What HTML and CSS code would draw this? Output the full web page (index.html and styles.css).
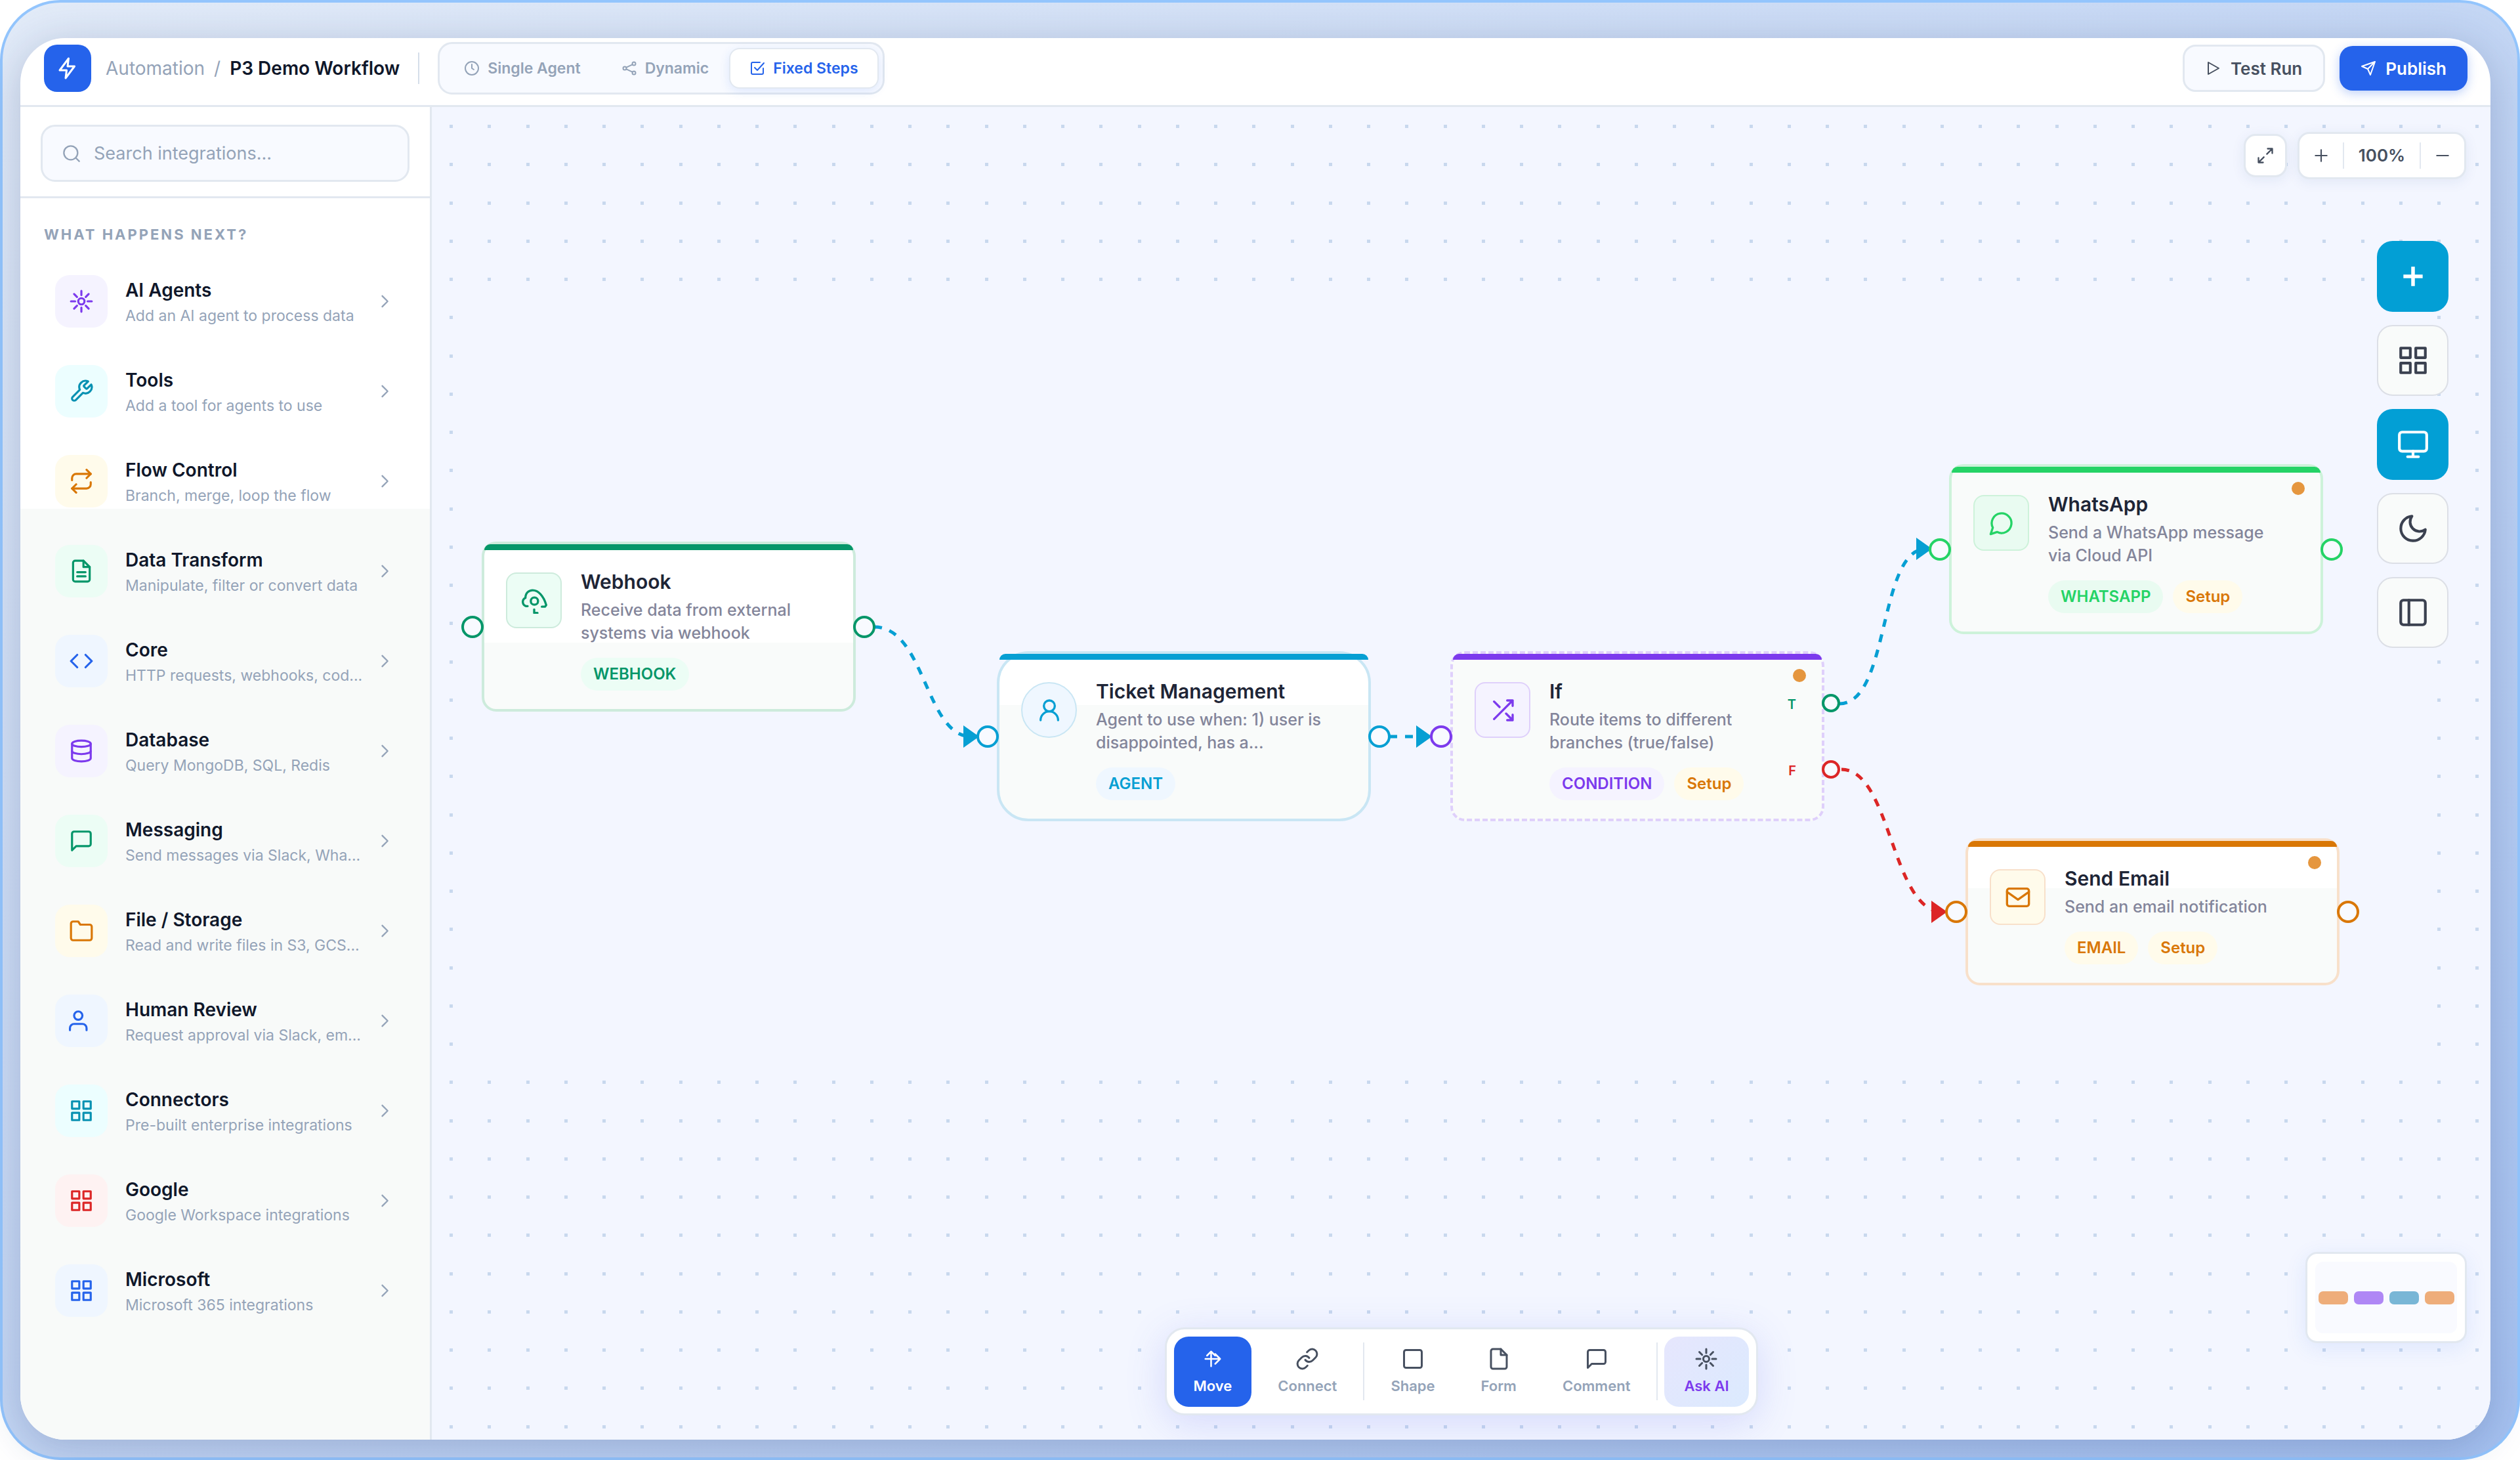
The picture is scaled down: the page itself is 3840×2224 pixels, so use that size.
FILE: index.html
```
<!DOCTYPE html>
<html lang="en">
<head>
  <meta charset="UTF-8">
  <meta name="viewport" content="width=device-width, initial-scale=1.0">
  <title>P3 Demo Workflow</title>
  <link rel="stylesheet" href="styles.css">
</head>
<body>

  <!-- shared icons -->
  <svg class="sprite" aria-hidden="true">
    <symbol id="i-bolt" viewBox="0 0 24 24"><path d="M13 2 4 14h7l-1 8 9-12h-7z"/></symbol>
    <symbol id="i-clock" viewBox="0 0 24 24"><circle cx="12" cy="12" r="10"/><path d="M12 6v6l3 2"/></symbol>
    <symbol id="i-share" viewBox="0 0 24 24"><circle cx="19" cy="5" r="2.5"/><circle cx="5" cy="12" r="2.5"/><circle cx="19" cy="19" r="2.5"/><path d="M7.500 10.700 16.600 6.300M7.500 13.300l9.100 4.400"/></symbol>
    <symbol id="i-check" viewBox="0 0 24 24"><path d="m8 11 4 4L22 4"/><path d="M21 12v7a2 2 0 0 1-2 2H5a2 2 0 0 1-2-2V5a2 2 0 0 1 2-2h11"/></symbol>
    <symbol id="i-play" viewBox="0 0 24 24"><path d="M4 3v18l16-9z"/></symbol>
    <symbol id="i-send" viewBox="0 0 24 24"><path d="M22 2 2 9l9 4 4 9zM22 2 11 13"/></symbol>
    <symbol id="i-search" viewBox="0 0 24 24"><circle cx="11" cy="11" r="9"/><path d="m18 18 4 4"/></symbol>
    <symbol id="i-expand" viewBox="0 0 24 24"><path d="M15 3h6v6M9 21H3v-6M21 3l-7 7M3 21l7-7"/></symbol>
    <symbol id="i-plus" viewBox="0 0 24 24"><path d="M12 4v16M4 12h16"/></symbol>
    <symbol id="i-minus" viewBox="0 0 24 24"><path d="M4 12h16"/></symbol>
    <symbol id="i-chevron" viewBox="0 0 24 24"><path d="m9 5 7 7-7 7"/></symbol>
    <symbol id="i-spark" viewBox="0 0 24 24"><circle cx="12" cy="12" r="3"/><path d="M12 2v4M12 18v4M2 12h4M18 12h4M5 5l2.800 2.800M16.200 16.200 19 19M19 5l-2.800 2.800M7.800 16.200 5 19"/></symbol>
    <symbol id="i-wrench" viewBox="0 0 24 24"><path d="M14.700 6.300a1 1 0 0 0 0 1.400l1.600 1.600a1 1 0 0 0 1.400 0l3.770-3.770a6 6 0 0 1-7.940 7.940l-6.910 6.910a2.120 2.120 0 0 1-3-3l6.910-6.910a6 6 0 0 1 7.940-7.940z"/></symbol>
    <symbol id="i-repeat" viewBox="0 0 24 24"><path d="m17 1 4 4-4 4"/><path d="M3 11V9a4 4 0 0 1 4-4h14M7 23l-4-4 4-4"/><path d="M21 13v2a4 4 0 0 1-4 4H3"/></symbol>
    <symbol id="i-file-text" viewBox="0 0 24 24"><path d="M14 2H6a2 2 0 0 0-2 2v16a2 2 0 0 0 2 2h12a2 2 0 0 0 2-2V8z"/><path d="M14 2v6h6M8 13h8M8 17h8"/></symbol>
    <symbol id="i-code" viewBox="0 0 24 24"><path d="m16 18 6-6-6-6M8 6l-6 6 6 6"/></symbol>
    <symbol id="i-database" viewBox="0 0 24 24"><ellipse cx="12" cy="5" rx="9" ry="3"/><path d="M3 5v14c0 1.660 4 3 9 3s9-1.340 9-3V5"/><path d="M3 12c0 1.660 4 3 9 3s9-1.340 9-3"/></symbol>
    <symbol id="i-message" viewBox="0 0 24 24"><path d="M21 15a2 2 0 0 1-2 2H7l-4 4V5a2 2 0 0 1 2-2h14a2 2 0 0 1 2 2z"/></symbol>
    <symbol id="i-folder" viewBox="0 0 24 24"><path d="M22 19a2 2 0 0 1-2 2H4a2 2 0 0 1-2-2V5a2 2 0 0 1 2-2h5l2 3h9a2 2 0 0 1 2 2z"/></symbol>
    <symbol id="i-person" viewBox="0 0 24 24"><circle cx="9" cy="7" r="4"/><path d="M1 21v-2a4 4 0 0 1 4-4h8a4 4 0 0 1 4 4v2"/></symbol>
    <symbol id="i-grid" viewBox="0 0 24 24"><path d="M3 3h7v7H3zM14 3h7v7h-7zM3 14h7v7H3zM14 14h7v7h-7z"/></symbol>
    <symbol id="i-monitor" viewBox="0 0 24 24"><rect x="2" y="3" width="20" height="14" rx="2"/><path d="M8 21h8M12 17v4"/></symbol>
    <symbol id="i-moon" viewBox="0 0 24 24"><path d="M21 12.790A9 9 0 1 1 11.210 3 7 7 0 0 0 21 12.790z"/></symbol>
    <symbol id="i-panel" viewBox="0 0 24 24"><rect x="3" y="3" width="18" height="18" rx="2"/><path d="M9 3v18"/></symbol>
    <symbol id="i-webhook" viewBox="0 0 24 24"><path d="M6 17H4.500C1 16 .5 11 4 9.500 4 5 7 2.500 10.600 2.500c5 0 10 5 12.400 13.500l-1 1.500h-3"/><circle cx="12.200" cy="12.400" r="3.300"/><path d="M12 20v3.200h3"/></symbol>
    <symbol id="i-agent" viewBox="0 0 24 24"><circle cx="12" cy="8" r="5"/><path d="M20 21a8 8 0 0 0-16 0"/></symbol>
    <symbol id="i-shuffle" viewBox="0 0 24 24"><path d="M16 3h5v5M4 20 21 3M21 16v5h-5M15 15l6 6M4 4l5 5"/></symbol>
    <symbol id="i-bubble" viewBox="0 0 24 24"><path d="M7.900 20A9 9 0 1 0 4 16.100L2 22z"/></symbol>
    <symbol id="i-mail" viewBox="0 0 24 24"><rect x="2" y="4" width="20" height="16" rx="2"/><path d="m22 7-10 7L2 7"/></symbol>
    <symbol id="i-move" viewBox="0 0 24 24"><path d="M5 8l5-5 5 5M10 3v18M3 12h18M15 6l6 6-6 6"/></symbol>
    <symbol id="i-link" viewBox="0 0 24 24"><path d="M10 13a5 5 0 0 0 7.540.540l3-3a5 5 0 0 0-7.070-7.070l-1.720 1.710"/><path d="M14 11a5 5 0 0 0-7.540-.540l-3 3a5 5 0 0 0 7.070 7.070l1.710-1.710"/></symbol>
    <symbol id="i-square" viewBox="0 0 24 24"><rect x="3" y="3" width="18" height="18" rx="2"/></symbol>
    <symbol id="i-file" viewBox="0 0 24 24"><path d="M14 2H6a2 2 0 0 0-2 2v16a2 2 0 0 0 2 2h12a2 2 0 0 0 2-2V8z"/><path d="M14 2v6h6"/></symbol>
  </svg>

  <div class="frame">
    <div class="app">

      <header class="topbar">
        <div class="logo"><svg class="icon"><use href="#i-bolt"/></svg></div>
        <nav class="breadcrumb">
          <a href="#">Automation</a>
          <span>/</span>
          <strong>P3 Demo Workflow</strong>
        </nav>
        <div class="topbar-line"></div>
        <div class="modes">
          <button class="mode"><svg class="icon"><use href="#i-clock"/></svg>Single Agent</button>
          <button class="mode"><svg class="icon"><use href="#i-share"/></svg>Dynamic</button>
          <button class="mode active"><svg class="icon"><use href="#i-check"/></svg>Fixed Steps</button>
        </div>
        <div class="actions">
          <button class="action"><svg class="icon"><use href="#i-play"/></svg>Test Run</button>
          <button class="action primary"><svg class="icon"><use href="#i-send"/></svg>Publish</button>
        </div>
      </header>

      <div class="main">
        <aside class="sidebar">
          <div class="search-area">
            <label class="search">
              <svg class="icon"><use href="#i-search"/></svg>
              <input type="text" placeholder="Search integrations..." aria-label="Search integrations">
            </label>
          </div>
          <h2>What happens next?</h2>
          <ul class="categories">
            <li><a class="category" href="#"><span class="tile violet"><svg class="icon"><use href="#i-spark"/></svg></span><span class="category-text"><b>AI Agents</b><small>Add an AI agent to process data</small></span><svg class="icon chevron"><use href="#i-chevron"/></svg></a></li>
            <li><a class="category" href="#"><span class="tile cyan"><svg class="icon"><use href="#i-wrench"/></svg></span><span class="category-text"><b>Tools</b><small>Add a tool for agents to use</small></span><svg class="icon chevron"><use href="#i-chevron"/></svg></a></li>
            <li><a class="category" href="#"><span class="tile amber"><svg class="icon"><use href="#i-repeat"/></svg></span><span class="category-text"><b>Flow Control</b><small>Branch, merge, loop the flow</small></span><svg class="icon chevron"><use href="#i-chevron"/></svg></a></li>
            <li><a class="category" href="#"><span class="tile green"><svg class="icon"><use href="#i-file-text"/></svg></span><span class="category-text"><b>Data Transform</b><small>Manipulate, filter or convert data</small></span><svg class="icon chevron"><use href="#i-chevron"/></svg></a></li>
            <li><a class="category" href="#"><span class="tile blue"><svg class="icon"><use href="#i-code"/></svg></span><span class="category-text"><b>Core</b><small>HTTP requests, webhooks, cod...</small></span><svg class="icon chevron"><use href="#i-chevron"/></svg></a></li>
            <li><a class="category" href="#"><span class="tile violet"><svg class="icon"><use href="#i-database"/></svg></span><span class="category-text"><b>Database</b><small>Query MongoDB, SQL, Redis</small></span><svg class="icon chevron"><use href="#i-chevron"/></svg></a></li>
            <li><a class="category" href="#"><span class="tile green"><svg class="icon"><use href="#i-message"/></svg></span><span class="category-text"><b>Messaging</b><small>Send messages via Slack, Wha...</small></span><svg class="icon chevron"><use href="#i-chevron"/></svg></a></li>
            <li><a class="category" href="#"><span class="tile amber"><svg class="icon"><use href="#i-folder"/></svg></span><span class="category-text"><b>File / Storage</b><small>Read and write files in S3, GCS...</small></span><svg class="icon chevron"><use href="#i-chevron"/></svg></a></li>
            <li><a class="category" href="#"><span class="tile blue"><svg class="icon"><use href="#i-person"/></svg></span><span class="category-text"><b>Human Review</b><small>Request approval via Slack, em...</small></span><svg class="icon chevron"><use href="#i-chevron"/></svg></a></li>
            <li><a class="category" href="#"><span class="tile cyan"><svg class="icon"><use href="#i-grid"/></svg></span><span class="category-text"><b>Connectors</b><small>Pre-built enterprise integrations</small></span><svg class="icon chevron"><use href="#i-chevron"/></svg></a></li>
            <li><a class="category" href="#"><span class="tile red"><svg class="icon"><use href="#i-grid"/></svg></span><span class="category-text"><b>Google</b><small>Google Workspace integrations</small></span><svg class="icon chevron"><use href="#i-chevron"/></svg></a></li>
            <li><a class="category" href="#"><span class="tile blue"><svg class="icon"><use href="#i-grid"/></svg></span><span class="category-text"><b>Microsoft</b><small>Microsoft 365 integrations</small></span><svg class="icon chevron"><use href="#i-chevron"/></svg></a></li>
          </ul>
        </aside>

        <main class="canvas">
          <svg class="layer" aria-hidden="true">
            <defs>
              <pattern id="dots" x="27" y="27" width="233" height="233" patternUnits="userSpaceOnUse">
                <path class="dot" d="M0 0h5v5H0zM58 0h5v5h-5zM117 0h5v5h-5zM175 0h5v5h-5zM0 58h5v5H0zM58 58h5v5h-5zM117 58h5v5h-5zM175 58h5v5h-5zM0 117h5v5H0zM58 117h5v5h-5zM117 117h5v5h-5zM175 117h5v5h-5zM0 175h5v5H0zM58 175h5v5h-5zM117 175h5v5h-5zM175 175h5v5h-5z"/>
              </pattern>
            </defs>
            <rect width="100%" height="100%" fill="url(#dots)"/>
          </svg>
          <div class="stage"></div>

          <svg class="layer" aria-hidden="true">
            <g class="edge">
              <path d="M674 792C752 792 752 959 822 959"/>
              <path d="M1459 959h46"/>
              <path d="M2145 909C2222 909 2204 673 2277 673"/>
              <path class="edge-false" d="M2148 1009C2224 1009 2224 1226 2302 1226"/>
            </g>
            <g class="arrow">
              <path d="M810 942v34l24-17z"/>
              <path d="M1500 942v34l24-17z"/>
              <path d="M2262 656v34l24-17z"/>
              <path class="arrow-false" d="M2285 1209v34l24-17z"/>
            </g>
          </svg>

          <article class="node webhook">
            <i class="port in"></i><i class="port out"></i>
            <div class="node-icon"><svg class="icon"><use href="#i-webhook"/></svg></div>
            <div class="node-body">
              <h3>Webhook</h3>
              <p>Receive data from external<br>systems via webhook</p>
              <div class="tags"><span class="tag">WEBHOOK</span></div>
            </div>
          </article>

          <article class="node ticket">
            <i class="port in"></i><i class="port out"></i>
            <div class="node-icon"><svg class="icon"><use href="#i-agent"/></svg></div>
            <div class="node-body">
              <h3>Ticket Management</h3>
              <p>Agent to use when: 1) user is<br>disappointed, has a...</p>
              <div class="tags"><span class="tag">AGENT</span></div>
            </div>
          </article>

          <article class="node condition">
            <i class="port in"></i><i class="port out true"></i><i class="port out false"></i>
            <i class="status"></i>
            <b class="branch true">T</b><b class="branch false">F</b>
            <div class="node-icon"><svg class="icon"><use href="#i-shuffle"/></svg></div>
            <div class="node-body">
              <h3>If</h3>
              <p>Route items to different<br>branches (true/false)</p>
              <div class="tags"><span class="tag">CONDITION</span><span class="tag setup">Setup</span></div>
            </div>
          </article>

          <article class="node whatsapp">
            <i class="port in"></i><i class="port out"></i>
            <i class="status"></i>
            <div class="node-icon"><svg class="icon"><use href="#i-bubble"/></svg></div>
            <div class="node-body">
              <h3>WhatsApp</h3>
              <p>Send a WhatsApp message<br>via Cloud API</p>
              <div class="tags"><span class="tag">WHATSAPP</span><span class="tag setup">Setup</span></div>
            </div>
          </article>

          <article class="node email">
            <i class="port in"></i><i class="port out"></i>
            <i class="status"></i>
            <div class="node-icon"><svg class="icon"><use href="#i-mail"/></svg></div>
            <div class="node-body">
              <h3>Send Email</h3>
              <p>Send an email notification</p>
              <div class="tags"><span class="tag">EMAIL</span><span class="tag setup">Setup</span></div>
            </div>
          </article>

          <div class="zoom">
            <button class="expand" aria-label="Fit view"><svg class="icon"><use href="#i-expand"/></svg></button>
            <div class="zoom-group">
              <button aria-label="Zoom in"><svg class="icon"><use href="#i-plus"/></svg></button>
              <span>100%</span>
              <button aria-label="Zoom out"><svg class="icon"><use href="#i-minus"/></svg></button>
            </div>
          </div>

          <div class="side-tools">
            <button class="on" aria-label="Add node"><svg class="icon bold"><use href="#i-plus"/></svg></button>
            <button aria-label="Layout"><svg class="icon"><use href="#i-grid"/></svg></button>
            <button class="on" aria-label="Preview"><svg class="icon"><use href="#i-monitor"/></svg></button>
            <button aria-label="Dark mode"><svg class="icon"><use href="#i-moon"/></svg></button>
            <button aria-label="Toggle sidebar"><svg class="icon"><use href="#i-panel"/></svg></button>
          </div>

          <div class="minimap">
            <div class="minimap-view"><i class="orange"></i><i class="purple"></i><i class="teal"></i><i class="orange"></i></div>
          </div>

          <div class="dock">
            <button class="move"><svg class="icon"><use href="#i-move"/></svg>Move</button>
            <button><svg class="icon"><use href="#i-link"/></svg>Connect</button>
            <hr>
            <button><svg class="icon"><use href="#i-square"/></svg>Shape</button>
            <button><svg class="icon"><use href="#i-file"/></svg>Form</button>
            <button><svg class="icon"><use href="#i-message"/></svg>Comment</button>
            <hr>
            <button class="ask"><svg class="icon"><use href="#i-spark"/></svg>Ask AI</button>
          </div>
        </main>
      </div>
    </div>
  </div>

</body>
</html>
```
FILE: styles.css
```
* {
  box-sizing: border-box;
}

body {
  margin: 0;
  background: #fff;
  font-family: Inter, "Liberation Sans", sans-serif;
  color: #0f172a;
}

button,
input {
  font-family: inherit;
}

button {
  border: none;
  background: transparent;
  padding: 0;
  display: flex;
  align-items: center;
  justify-content: center;
  cursor: pointer;
}

a {
  color: inherit;
  text-decoration: none;
}

.sprite {
  position: absolute;
  width: 0;
  height: 0;
}

.icon {
  width: 28px;
  height: 28px;
  flex: none;
  fill: none;
  stroke: currentColor;
  stroke-width: 2;
  stroke-linecap: round;
  stroke-linejoin: round;
}

/* window frame */
.frame {
  min-height: 100vh;
  display: flex;
  border: 4px solid #93c5fd;
  border-radius: 92px;
  padding: 54px 41px 27px 27px;
  background: linear-gradient(150deg, #e2ebf8, #a5c1f0);
}

.app {
  flex: 1;
  display: flex;
  flex-direction: column;
  border-radius: 68px;
  overflow: hidden;
  background: #fff;
  box-shadow: 0 12px 64px rgba(30, 50, 110, 0.24);
}

/* top bar */
.topbar {
  display: flex;
  align-items: center;
  height: 105px;
  padding: 0 35px 10px 36px;
  border-bottom: 3px solid #e2e8f0;
}

.logo {
  width: 72px;
  height: 72px;
  border-radius: 20px;
  background: #2563eb;
  color: #fff;
  display: flex;
  align-items: center;
  justify-content: center;
}

.logo .icon {
  width: 36px;
  height: 36px;
}

.breadcrumb {
  display: flex;
  gap: 14px;
  margin-left: 22px;
  font-size: 28px;
  color: #94a3b8;
}

.breadcrumb strong {
  font-weight: 600;
  color: #0f172a;
}

.topbar-line {
  width: 2px;
  height: 48px;
  margin: 0 28px;
  background: #d5deea;
}

.modes {
  display: flex;
  height: 80px;
  padding: 6px;
  border: 3px solid #e2e8f0;
  border-radius: 22px;
  background: #f8faff;
}

.mode {
  gap: 12px;
  padding: 0 29px;
  border: 2px solid transparent;
  border-radius: 16px;
  font-size: 23px;
  font-weight: 600;
  color: #94a3b8;
}

.mode .icon {
  width: 24px;
  height: 24px;
}

.mode.active {
  background: #fff;
  border-color: #e2e8f0;
  color: #2563eb;
  box-shadow: 0 4px 16px rgba(37, 99, 235, 0.12);
}

.actions {
  display: flex;
  align-items: center;
  gap: 22px;
  margin-left: auto;
}

.action {
  gap: 14px;
  height: 72px;
  padding: 0 32px;
  border: 3px solid #e2e8f0;
  border-radius: 20px;
  background: #f8faff;
  font-size: 26px;
  font-weight: 600;
  color: #475060;
}

.action .icon {
  width: 24px;
  height: 24px;
}

.action.primary {
  height: 68px;
  border: none;
  background: #2563eb;
  color: #fff;
  box-shadow: 0 4px 16px rgba(37, 99, 235, 0.3);
}

.main {
  flex: 1;
  display: flex;
}

/* sidebar */
.sidebar {
  width: 627px;
  flex: none;
  border-right: 3px solid #e2e8f0;
  background: linear-gradient(#fff 612px, #f8faf9 612px);
}

.search-area {
  height: 139px;
  padding: 27px 31px 0;
  border-bottom: 3px solid #e2e8f0;
}

.search {
  display: flex;
  align-items: center;
  gap: 20px;
  height: 87px;
  padding: 0 30px;
  border: 3px solid #e2e8f0;
  border-radius: 22px;
  background: #f8faff;
  color: #94a3b8;
}

.search input {
  flex: 1;
  min-width: 0;
  padding: 0;
  border: none;
  outline: none;
  background: transparent;
  font-size: 27px;
}

.search input::placeholder {
  color: #94a3b8;
}

.sidebar h2 {
  margin: 40px 36px 18px;
  font-size: 22px;
  line-height: 30px;
  font-weight: 700;
  letter-spacing: 3px;
  text-transform: uppercase;
  color: #94a3b8;
}

.categories {
  list-style: none;
  margin: 0;
  padding: 0;
}

.category {
  display: flex;
  align-items: center;
  height: 137px;
  padding: 0 55px 0 53px;
}

.tile {
  width: 80px;
  height: 80px;
  flex: none;
  border-radius: 22px;
  display: flex;
  align-items: center;
  justify-content: center;
}

.tile .icon {
  width: 38px;
  height: 38px;
}

.tile.violet { background: #f5f3ff; color: #7c3aed; }
.tile.cyan { background: #ecfeff; color: #0891b2; }
.tile.amber { background: #fffbeb; color: #d97706; }
.tile.green { background: #ecfdf5; color: #059669; }
.tile.blue { background: #eff6ff; color: #2563eb; }
.tile.red { background: #fef2f2; color: #dc2626; }

.category-text {
  flex: 1;
  display: flex;
  flex-direction: column;
  padding: 6px 0 0 27px;
  white-space: nowrap;
}

.category-text b {
  font-size: 28px;
  line-height: 39px;
  font-weight: 600;
}

.category-text small {
  font-size: 23px;
  line-height: 39px;
  color: #94a3b8;
}

.chevron {
  color: #94a3b8;
}

/* canvas */
.canvas {
  position: relative;
  flex: 1;
  overflow: hidden;
  background: #f3f6ff;
}

.layer {
  position: absolute;
  inset: 0;
  width: 100%;
  height: 100%;
}

.dot {
  fill: #c8d8ee;
}

/* keeps the working area free of dots */
.stage {
  position: absolute;
  inset: 290px 105px 573px 60px;
  background: #f3f6ff;
}

.edge path {
  fill: none;
  stroke: #069fd3;
  stroke-width: 5;
  stroke-dasharray: 12 12;
}

.arrow path { fill: #069fd3; }
.edge path.edge-false { stroke: #dc2626; }
.arrow path.arrow-false { fill: #dc2626; }

.node {
  --soft: #f9fbfa;
  position: absolute;
  width: 570px;
  display: flex;
  gap: 29px;
  padding: 37px 24px 28px 33px;
  border: 4px solid var(--line);
  border-radius: 22px;
  background: var(--soft);
}

.node::before {
  content: "";
  position: absolute;
  top: 0;
  left: 0;
  right: 0;
  height: 9px;
  border-radius: 16px 16px 0 0;
  background: var(--accent);
}

.webhook {
  --accent: #059669;
  --line: #cdebdc;
  --tint: #ecfdf5;
  left: 76px;
  top: 662px;
  background: linear-gradient(#fff 150px, var(--soft) 150px);
}

.ticket {
  --accent: #069fd3;
  --line: #c9e6f4;
  --tint: #eff7ff;
  left: 861px;
  top: 829px;
  border-radius: 48px;
  background: linear-gradient(#fff 78px, var(--soft) 78px);
}

.condition {
  --accent: #7c3aed;
  --line: #dfd0fb;
  --tint: #f5f3ff;
  left: 1552px;
  top: 829px;
  border-style: dashed;
}

.whatsapp {
  --accent: #25d366;
  --line: #cdf2da;
  --tint: #e9fbf1;
  left: 2312px;
  top: 544px;
}

.email {
  --accent: #d97706;
  --line: #f8e0ca;
  --tint: #fffbeb;
  left: 2337px;
  top: 1114px;
  background: linear-gradient(#fff 72px, var(--soft) 72px);
}

.node-icon {
  width: 85px;
  height: 85px;
  flex: none;
  margin-top: 6px;
  border: 2px solid var(--line);
  border-radius: 16px;
  background: var(--tint);
  color: var(--accent);
  display: flex;
  align-items: center;
  justify-content: center;
}

.node-icon .icon {
  width: 40px;
  height: 40px;
}

.ticket .node-icon {
  border-radius: 50%;
}

.node h3 {
  margin: 0 0 6px;
  font-size: 30px;
  line-height: 40px;
  font-weight: 600;
  color: #1e2536;
}

.node p {
  margin: 0 0 20px;
  font-size: 25px;
  line-height: 35px;
  font-weight: 500;
  color: #83859a;
  white-space: nowrap;
}

.tags {
  display: flex;
  gap: 15px;
}

.tag {
  height: 50px;
  padding: 0 19px;
  border-radius: 25px;
  background: var(--tint);
  color: var(--accent);
  font-size: 24px;
  line-height: 50px;
  font-weight: 600;
}

.tag.setup {
  background: #fffbeb;
  color: #d97706;
}

.port {
  position: absolute;
  top: 50%;
  width: 34px;
  height: 34px;
  margin-top: -17px;
  border: 4px solid var(--accent);
  border-radius: 50%;
  background: #f8faff;
}

.port.in { left: -35px; }
.port.out { right: -34px; }

.condition .port.out {
  width: 28px;
  height: 28px;
  margin-top: -14px;
  right: -28px;
}

.condition .port.true { top: 30%; border-color: #059669; }
.condition .port.false { top: 70%; border-color: #dc2626; }

.status {
  position: absolute;
  top: 23px;
  right: 24px;
  width: 20px;
  height: 20px;
  border-radius: 50%;
  background: #e5963e;
}

.branch {
  position: absolute;
  right: 39px;
  margin-top: -10px;
  font-size: 20px;
  line-height: 24px;
  font-weight: 600;
}

.branch.true { top: 30%; color: #059669; }
.branch.false { top: 70%; color: #dc2626; }

/* zoom controls */
.zoom {
  position: absolute;
  top: 38px;
  right: 37px;
  display: flex;
  align-items: center;
  gap: 16px;
  color: #475060;
}

.expand,
.zoom-group {
  border: 3px solid #e2e8f0;
  border-radius: 18px;
  background: #fff;
  box-shadow: 0 4px 20px rgba(30, 58, 138, 0.08);
}

.expand {
  width: 66px;
  height: 66px;
}

.zoom-group {
  display: flex;
  align-items: center;
  height: 72px;
  font-size: 26px;
  font-weight: 600;
}

.zoom-group button {
  width: 66px;
  height: 40px;
}

.zoom button {
  color: inherit;
}

.zoom-group .icon {
  width: 26px;
  height: 26px;
}

.zoom-group span {
  width: 119px;
  line-height: 40px;
  border-left: 2px solid #e2e8f0;
  border-right: 2px solid #e2e8f0;
  text-align: center;
}

/* side tools */
.side-tools {
  position: absolute;
  top: 204px;
  right: 64px;
  display: flex;
  flex-direction: column;
  gap: 20px;
}

.side-tools button {
  width: 109px;
  height: 108px;
  border: 2px solid #dcdfe6;
  border-radius: 24px;
  background: #f9fbfa;
  color: #3b4150;
}

.side-tools button.on {
  border: none;
  background: #029fd5;
  color: #fff;
}

.side-tools .icon {
  width: 50px;
  height: 50px;
}

.side-tools .icon.bold {
  width: 44px;
  stroke-width: 3;
  stroke-linecap: butt;
}

.minimap {
  position: absolute;
  right: 36px;
  bottom: 147px;
  width: 246px;
  height: 139px;
  padding: 12px;
  border: 3px solid #e2e8f0;
  border-radius: 18px;
  background: #fff;
  box-shadow: 0 8px 32px rgba(37, 99, 235, 0.1);
}

.minimap-view {
  height: 100%;
  display: flex;
  align-items: center;
  justify-content: center;
  gap: 9px;
  border-radius: 12px;
  background: #f9faff;
}

.minimap-view i {
  width: 45px;
  height: 20px;
  border-radius: 7px;
}

.orange { background: #eead7a; }
.purple { background: #af87f5; }
.teal { background: #79b6d6; }

/* bottom dock */
.dock {
  position: absolute;
  left: 50%;
  bottom: 37px;
  transform: translateX(-50%);
  display: flex;
  align-items: center;
  gap: 10px;
  height: 134px;
  padding: 0 11px;
  border: 3px solid #e2e8f0;
  border-radius: 30px;
  background: #fff;
  box-shadow: 0 12px 60px rgba(79, 90, 240, 0.18);
}

.dock button {
  flex-direction: column;
  gap: 8px;
  height: 107px;
  padding: 0 30px;
  border-radius: 22px;
  font-size: 22px;
  line-height: 30px;
  font-weight: 600;
  color: #94a3b8;
}

.dock .icon {
  width: 36px;
  height: 36px;
  color: #475060;
}

.dock hr {
  width: 2px;
  height: 88px;
  margin: 0;
  border: none;
  background: #e2e8f0;
}

.dock .move {
  background: #2563eb;
  color: #fff;
}

.dock .move .icon {
  width: 30px;
  color: #fff;
}

.dock .ask {
  background: linear-gradient(135deg, #e6e6fd, #dbeafe);
  color: #7c3aed;
}
```
